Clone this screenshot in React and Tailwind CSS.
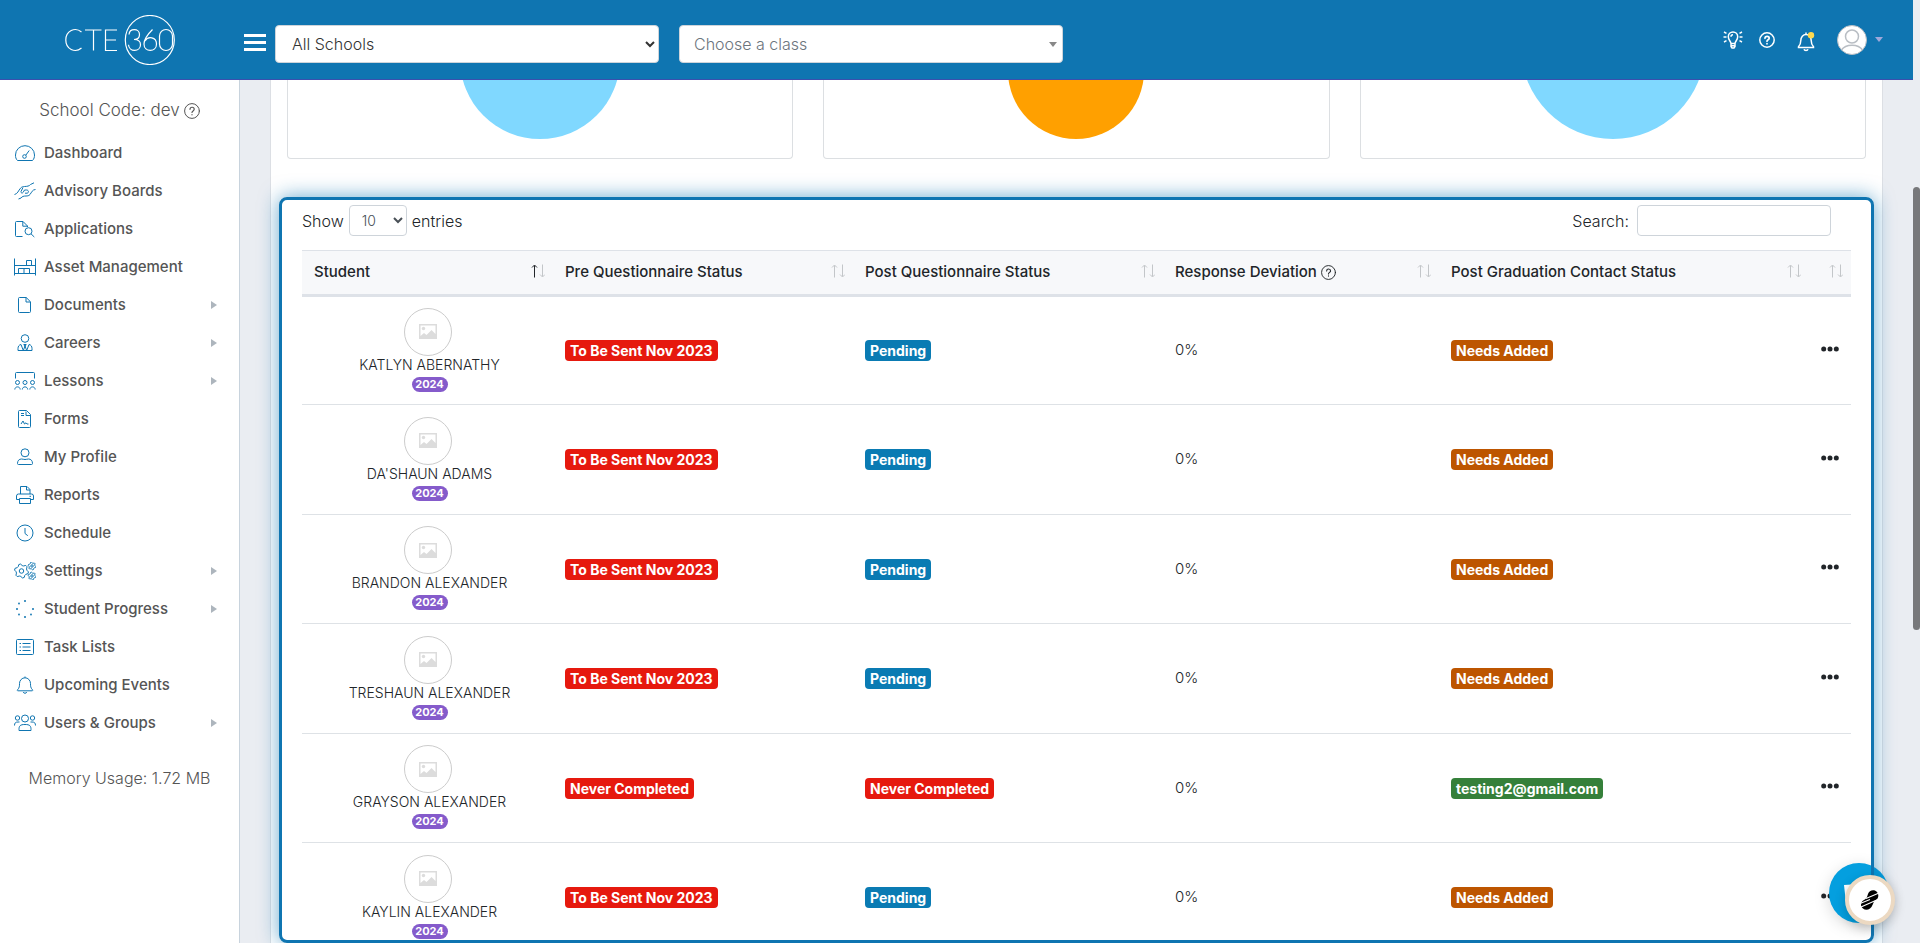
import React from 'react';

const menuItems = [
    { label: 'Dashboard', icon: 'dashboard' },
    { label: 'Advisory Boards', icon: 'hands' },
    { label: 'Applications', icon: 'fileSearch' },
    { label: 'Asset Management', icon: 'shelves' },
    { label: 'Documents', icon: 'file', hasChildren: true },
    { label: 'Careers', icon: 'tie', hasChildren: true },
    { label: 'Lessons', icon: 'classroom', hasChildren: true },
    { label: 'Forms', icon: 'form' },
    { label: 'My Profile', icon: 'user' },
    { label: 'Reports', icon: 'print' },
    { label: 'Schedule', icon: 'clock' },
    { label: 'Settings', icon: 'cogs', hasChildren: true },
    { label: 'Student Progress', icon: 'spinner', hasChildren: true },
    { label: 'Task Lists', icon: 'list' },
    { label: 'Upcoming Events', icon: 'bell' },
    { label: 'Users & Groups', icon: 'users', hasChildren: true },
];

const columns = [
    { label: 'Student', width: 'w-[251px]', sorted: true },
    { label: 'Pre Questionnaire Status', width: 'w-[300px]' },
    { label: 'Post Questionnaire Status', width: 'w-[310px]' },
    { label: 'Response Deviation', width: 'w-[276px]', help: true },
    { label: 'Post Graduation Contact Status', width: 'w-[370px]' },
    { label: '', width: 'w-[42px]' },
];

const toBeSent = { text: 'To Be Sent Nov 2023', color: 'bg-[#e6190e]' };
const never = { text: 'Never Completed', color: 'bg-[#e6190e]' };
const pending = { text: 'Pending', color: 'bg-[#0a7bb3]' };
const needsAdded = { text: 'Needs Added', color: 'bg-[#bd5500]' };

const students = [
    { name: 'KATLYN ABERNATHY', pre: toBeSent, post: pending, contact: needsAdded },
    { name: "DA'SHAUN ADAMS", pre: toBeSent, post: pending, contact: needsAdded },
    { name: 'BRANDON ALEXANDER', pre: toBeSent, post: pending, contact: needsAdded },
    { name: 'TRESHAUN ALEXANDER', pre: toBeSent, post: pending, contact: needsAdded },
    { name: 'GRAYSON ALEXANDER', pre: never, post: never, contact: { text: 'testing2@gmail.com', color: 'bg-[#35803a]' } },
    { name: 'KAYLIN ALEXANDER', pre: toBeSent, post: pending, contact: needsAdded },
];

// Outline of a toothed wheel, with its hub
const gear = (cx, cy, r, teeth) => {
    const points = [];
    for (let i = 0; i < teeth * 4; i++) {
        const angle = ((i + 0.5) / (teeth * 4)) * Math.PI * 2;
        const radius = i % 4 < 2 ? r : r * 0.78;
        points.push(`${(cx + radius * Math.cos(angle)).toFixed(2)},${(cy + radius * Math.sin(angle)).toFixed(2)}`);
    }
    return (
        <>
            <polygon points={points.join(' ')} />
            <circle cx={cx} cy={cy} r={r * 0.32} />
        </>
    );
};

// All menu glyphs share a 22x18 box
const menuIcons = {
    dashboard: <><path d="M3.500 16.500C1.800 15 1.500 13 1.500 11a9.500 9.300 0 0 1 19 0c0 2-.4 4-2 5.500z" /><circle cx="10.500" cy="12.500" r="1.800" /><path d="M11.800 11.200l3.400-4.700" /></>,
    hands: <path d="M.5 12.500C3.500 12 4.500 8.500 6.500 6.200 7.500 5 9 4.500 10.500 4.500c2.500 0 5-.5 6-2L20 .8M21.500 7.500c-3 0-4 3-5.500 5-1 1.300-2.500 1.500-4 1.500-2.500 0-4 .5-5 2L4.500 17M9 5.500L7 9.500c-.5 1.500 1.500 2 2.200.8L10.500 8h2.200c2.300.2 2.300 3 .3 3.200h-2" />,
    fileSearch: <><path d="M8.500 16.500h-6a1 1 0 0 1-1-1v-13a1 1 0 0 1 1-1H9l4.500 4.500v1M8.800 1.500v4.700h4.700" /><circle cx="14.500" cy="11.200" r="3.500" /><path d="M17 13.800l3.300 3.200" /></>,
    shelves: <path d="M.5.5v17M21.500.5v17M.5 7.500h21M.5 15.500h21M12.500 7V2.500h5V7M4.500 15v-4.500h11V15M10 10.500V15" />,
    file: <path d="M12 1.500v4.500h4.500M5.500 1.500h6.700l4.300 4.300v9.700a1 1 0 0 1-1 1h-10a1 1 0 0 1-1-1v-13a1 1 0 0 1 1-1z" />,
    tie: <><circle cx="11" cy="4.500" r="3.800" /><path d="M7 10.500c-2 .3-3 2-3 4v2h14v-2c0-2-1-3.700-3-4l-2.300 6L11 12l-1.700 4.500zM9.800 10.500h2.400L11 12.500z" /></>,
    classroom: <><path d="M1.500 6.500v-5a1 1 0 0 1 1-1h17a1 1 0 0 1 1 1v5" /><circle cx="3.500" cy="10.500" r="2" /><circle cx="11" cy="10.500" r="2" /><circle cx="18.500" cy="10.500" r="2" /><path d="M.8 17.500c.2-3.500 5.200-3.500 5.400 0M8.300 17.500c.2-3.500 5.200-3.500 5.400 0M15.800 17.500c.2-3.500 5.200-3.500 5.400 0" /></>,
    form: <><path d="M12 1.500v4h4.500M5.500.5h7l4 4v12a1 1 0 0 1-1 1h-10a1 1 0 0 1-1-1v-15a1 1 0 0 1 1-1zM7 3.500h3M7 5.500h3" /><path d="M7 14l2-3 1.500 3 1.500-1.200 1 1.200h1.500" /></>,
    user: <><circle cx="11" cy="4.800" r="4" /><path d="M3.500 15.500c0-3 1.700-4.500 4-4.500 1.500 0 2 .5 3.500.5s2-.5 3.500-.5c2.300 0 4 1.500 4 4.500 0 .7-.4 1-1 1h-13c-.6 0-1-.3-1-1z" /></>,
    print: <><path d="M6.500 8V.500h6.500l3 3V8M12.500.500v3.500H16M5.500 13.500h-3v-3.500a2 2 0 0 1 2-2h13a2 2 0 0 1 2 2v3.500h-3" /><path d="M5.500 12.500h11v5h-11z" /><path d="M15.500 10.300h1.500" /></>,
    clock: <><circle cx="11" cy="9" r="8" /><path d="M11 4v5.500l2.800 2.200" /></>,
    cogs: <>{gear(7.5, 9, 7, 6)}{gear(18, 4, 3.8, 6)}{gear(18, 14, 3.8, 6)}</>,
    spinner: (
        <g fill="#0f75b1" stroke="none">
            <circle cx="11" cy="1" r="1" /><circle cx="5" cy="3.500" r=".9" /><circle cx="3" cy="9" r="1" /><circle cx="5" cy="14.500" r=".9" />
            <circle cx="11" cy="17" r="1" /><circle cx="17" cy="14.500" r=".9" /><circle cx="19" cy="9" r="1" />
        </g>
    ),
    list: <><rect x="2.500" y="1.500" width="17" height="15" rx="1" /><path d="M5.500 5.500h1.500M8.500 5.500h8M5.500 9h1.500M8.500 9h8M5.500 12.500h1.500M8.500 12.500h8" /></>,
    bell: <path d="M11 .5v1.300M3.500 13.800c2-2 2-3.800 2-6.300a5.500 5.700 0 0 1 11 0c0 2.500 0 4.300 2 6.300.4.500.2 1-.4 1H3.900c-.6 0-.8-.5-.4-1zM9.300 16c.3 1.700 3.100 1.700 3.400 0" />,
    users: <><circle cx="11" cy="4.500" r="3.500" /><circle cx="3.500" cy="4" r="2.200" /><circle cx="18.500" cy="4" r="2.200" /><path d="M5 15.500c0-3.500 1-5 6-5s6 1.500 6 5v1H5zM.5 11.500c0-2.500 1-3.500 3.500-3.500h1.500M21.500 11.500c0-2.500-1-3.500-3.500-3.500h-1.500" /></>,
};

const MenuIcon = ({ name }) => (
    <svg viewBox="0 0 22 18" fill="none" stroke="#0f75b1" strokeLinejoin="round" className="w-[22px] h-[18px] shrink-0">
        {menuIcons[name]}
    </svg>
);

const HelpIcon = ({ className }) => (
    <svg viewBox="0 0 16 16" fill="none" stroke="currentColor" strokeLinecap="round" className={className}>
        <circle cx="8" cy="8" r="7.400" />
        <path d="M6 6.300c.1-2.800 4.200-2.700 4.200 0C10.200 7.900 8 7.900 8 9.500M8 11.600v.2" strokeWidth="1.200" />
    </svg>
);

const SortIcon = ({ sorted }) => (
    <svg viewBox="0 0 14 14" fill="none" stroke="#c3c6c9" className="w-[14px] h-[14px] shrink-0">
        <path d="M3.500 13.500V1.500M1 3.500l2.500-2.500L6 3.500" stroke={sorted ? '#212529' : '#c3c6c9'} />
        <path d="M11.500 .5v12M9 10.500l2.500 2.500L14 10.500" />
    </svg>
);

const Logo = () => (
    <svg viewBox="0 0 112 50" fill="none" stroke="#fff" strokeWidth="1.200" className="w-[112px] h-[50px]" role="img" aria-label="CTE 360">
        <path d="M16.500 17C10 11.500.8 16 .8 25s9.200 13.500 15.700 8M20 15h16.500M28.500 15v20.500M52 15H40.500v20.500H52M40.500 25H51" />
        <circle cx="84.800" cy="25" r="24.500" />
        <path d="M64 19.500c.5-6.500 10.500-6.500 10.500 0 0 3.500-2.500 5-5.500 5 3.500 0 6.500 1.500 6.500 5.200 0 7.500-11.500 7.500-12 0" />
        <path d="M87.500 14.500c-4 4-8.500 9-8.500 14.500 0 8.500 12.500 8.500 12.500 0 0-7-8.500-8.500-11.500-3" />
        <rect x="94.500" y="14.500" width="13" height="21" rx="6.500" />
    </svg>
);

const TopBar = () => (
    <header className="h-20 mr-[7px] shrink-0 bg-[#0f75b1] border-b border-[#3b4fae] flex items-center relative z-10">
        <div className="w-60 pl-px shrink-0 flex justify-center"><Logo /></div>
        <button type="button" aria-label="Toggle menu" className="ml-1 mt-1.5 flex flex-col gap-1">
            <span className="block w-[22px] h-[3px] bg-white"></span>
            <span className="block w-[22px] h-[3px] bg-white"></span>
            <span className="block w-[22px] h-[3px] bg-white"></span>
        </button>
        <select aria-label="School" className="ml-[9px] mt-2 w-[384px] h-[38px] rounded border border-[#ced4da] bg-white px-3 text-[#333] text-base font-light">
            <option>All Schools</option>
        </select>
        <div className="relative ml-5 mt-2 w-[384px]">
            <select aria-label="Class" className="appearance-none w-full h-[38px] rounded border border-[#ced4da] bg-white px-3.5 text-[#6c757d] text-base font-light">
                <option>Choose a class</option>
            </select>
            <span className="absolute right-1.5 top-[17px] border-x-4 border-t-[5px] border-x-transparent border-t-[#888]"></span>
        </div>
        <div className="ml-auto mr-[30px] flex items-center text-white">
            <button type="button" aria-label="Tips">
                <svg viewBox="0 0 20 18" fill="none" stroke="currentColor" strokeWidth="1.500" className="w-5 h-[18px]">
                    <path d="M8 12.500C8 10.500 5.300 9 5.300 5.700a4.700 4.700 0 0 1 9.400 0C14.700 9 12 10.500 12 12.500zM8 12.500v3l1 1.500h2l1-1.500v-3M8 14.800h4M8 5.800c0-1.300.8-2 2-2M.5 6h3M16.500 6h3M1 1l2.500 1.300M19 1l-2.500 1.300M1 11l2.500-1.300M19 11l-2.500-1.300" />
                </svg>
            </button>
            <button type="button" aria-label="Help" className="ml-4">
                <svg viewBox="0 0 16 16" fill="none" stroke="currentColor" strokeWidth="1.500" strokeLinecap="round" className="w-4 h-4">
                    <circle cx="8" cy="8" r="7.200" />
                    <path d="M6 6.300c.1-2.600 4.200-2.500 4.200 0C10.200 7.800 8 7.800 8 9.200M8 11.600v.2" strokeWidth="1.700" />
                </svg>
            </button>
            <button type="button" aria-label="Notifications" className="ml-5 mt-1">
                <svg viewBox="0 0 22 20" fill="none" stroke="currentColor" strokeWidth="1.500" className="w-[22px] h-5">
                    <path d="M11 .5v1.500M3.500 14.800c2-2 2.300-3.800 2.300-6.300a5.200 6 0 0 1 10.400 0c0 2.500.3 4.300 2.300 6.300v.7h-15zM9 17.300c.5 1.600 3.500 1.600 4 0" />
                    <circle cx="16" cy="3.200" r="3.200" fill="#ffd94f" stroke="none" />
                </svg>
            </button>
            <button type="button" aria-label="Account" className="ml-5 flex items-center gap-2">
                <svg viewBox="0 0 30 30" fill="none" stroke="#b9bec4" strokeWidth="1.500" className="w-[30px] h-[30px]">
                    <circle cx="15" cy="15" r="14.500" fill="#fff" strokeWidth="1" />
                    <circle cx="15" cy="11.500" r="6.500" />
                    <path d="M4.500 25c4-6.500 17-6.500 21 0" />
                </svg>
                <span className="border-x-4 border-t-[5px] border-x-transparent border-t-[#9fa8da]"></span>
            </button>
        </div>
    </header>
);

const Sidebar = () => (
    <aside className="w-60 shrink-0 bg-white border-r border-[#c8d3dd] text-[#555]">
        <p className="mt-[19px] h-6 flex items-center justify-center gap-1 text-[17px] font-light">
            School Code: dev <HelpIcon className="w-4 h-4" />
        </p>
        <nav className="mt-[11px]">
            {menuItems.map((item) => (
                <a key={item.label} href="#" className="h-[38px] pl-3.5 pr-[22px] flex items-center gap-2 text-[15px] font-medium">
                    <MenuIcon name={item.icon} />
                    <span>{item.label}</span>
                    {item.hasChildren && <span className="ml-auto border-y-4 border-l-[6px] border-y-transparent border-l-[#adb5bd]"></span>}
                </a>
            ))}
        </nav>
        <p className="mt-6 text-center text-base font-light">Memory Usage: 1.72 MB</p>
    </aside>
);

const charts = [
    { color: '#80d8ff', cy: 59, r: 80 },
    { color: '#ffa000', cy: 71, r: 68 },
    { color: '#80d8ff', cy: 47, r: 92 },
];

const ChartCards = () => (
    <div className="grid grid-cols-3 gap-[30px] px-4 shrink-0">
        {charts.map((chart, i) => (
            <div key={i} className="h-[79px] border border-t-0 border-[#dcdfe2] rounded-b flex justify-center">
                <svg viewBox="0 80 200 60" className="w-[200px] h-[60px]">
                    <circle cx="100" cy={chart.cy} r={chart.r} fill={chart.color} />
                </svg>
            </div>
        ))}
    </div>
);

const StatusBadge = ({ status }) => (
    <span className={`block w-fit h-[21px] px-[5px] rounded leading-[21px] text-sm font-bold text-white ${status.color}`}>{status.text}</span>
);

const StudentTable = () => (
    <table className="w-full table-fixed border-collapse text-left">
        <thead>
            <tr className="h-[45px] bg-[#f7f8fa] border-t border-b-[3px] border-[#dee2e8]">
                {columns.map((col, i) => (
                    <th key={i} className={`${col.width} p-0 font-medium text-[15px] text-[#212529]`}>
                        <div className="flex items-center pl-3 pr-2">
                            {col.label}
                            {col.help && <HelpIcon className="w-[15px] h-[15px] ml-1" />}
                            <span className="ml-auto mb-1"><SortIcon sorted={col.sorted} /></span>
                        </div>
                    </th>
                ))}
            </tr>
        </thead>
        <tbody>
            {students.map((student) => (
                <tr key={student.name} className="odd:h-[109px] even:h-[110px] border-b border-[#dee2e6] text-[#212529]">
                    <td className="p-0 pb-0.5 text-center">
                        <div className="w-12 h-12 mx-auto rounded-full border border-[#ccc] flex items-center justify-center">
                            <svg viewBox="0 0 18 15" className="w-[18px] h-[15px]" fill="#dcdcdc">
                                <path fillRule="evenodd" d="M0 0h18v15H0zM1.500 1.500v10.500L5 9l2.500 2 5-5 4 4V1.500z" />
                                <circle cx="4.500" cy="4.500" r="1.700" />
                            </svg>
                        </div>
                        <div className="pl-1">
                            <p className="text-sm leading-[18px] font-light">{student.name}</p>
                            <span className="block w-9 h-[15px] mx-auto mt-[3px] rounded-full bg-[#855bcb] text-white text-[11px] leading-[15px] font-bold">2024</span>
                        </div>
                    </td>
                    <td className="p-0 pl-3"><StatusBadge status={student.pre} /></td>
                    <td className="p-0 pl-3"><StatusBadge status={student.post} /></td>
                    <td className="p-0 pl-3 text-[15px] font-light">0%</td>
                    <td className="p-0 pl-3"><StatusBadge status={student.contact} /></td>
                    <td className="p-0 pr-3 pb-1">
                        <button type="button" aria-label="More actions" className="block ml-auto">
                            <svg viewBox="0 0 18 6" className="block w-[18px] h-1.5" fill="#212529">
                                <circle cx="2.700" cy="3" r="2.500" /><circle cx="9" cy="3" r="2.500" /><circle cx="15.300" cy="3" r="2.500" />
                            </svg>
                        </button>
                    </td>
                </tr>
            ))}
        </tbody>
    </table>
);

const App = () => {
    return (
        <div className="h-screen flex flex-col overflow-hidden bg-[#eaedf2] relative font-['Inter',sans-serif]">
            <TopBar />
            <div className="flex flex-1 min-h-0">
                <Sidebar />
                <main className="flex-1 min-w-0 ml-[30px] mr-[37px] bg-white border-x border-[#dcdfe4] flex flex-col">
                    <ChartCards />
                    <section className="relative flex-1 min-h-0 mt-[38px] mx-2">
                        <div className="h-full overflow-hidden rounded-lg px-[23px]">
                            <div className="h-[53px] pt-2 pr-5 flex items-start justify-between text-base font-light text-[#212529]">
                                <label className="flex items-center gap-[5px]">
                                    Show
                                    <select className="w-[58px] h-[31px] px-2 rounded border border-[#ced4da] bg-white text-sm text-[#495057]">
                                        <option>10</option>
                                    </select>
                                    entries
                                </label>
                                <label className="flex items-center gap-2">
                                    Search:
                                    <input type="search" className="w-[194px] h-[31px] px-2 rounded border border-[#ced4da] bg-white text-sm" />
                                </label>
                            </div>
                            <StudentTable />
                        </div>
                        {/* Highlight frame drawn over the table and the chat bubble */}
                        <div className="absolute inset-0 z-20 pointer-events-none rounded-lg border-[3px] border-[#0f75b1] shadow-[0_0_20px_#0f75b1a0]"></div>
                    </section>
                </main>
            </div>

            <div className="absolute right-0 top-[187px] w-[7px] h-[443px] rounded-full bg-[#77787b]"></div>

            {/* Floating buttons */}
            <button type="button" aria-label="Open chat" className="absolute z-10 right-[31px] bottom-5 w-[60px] h-[60px] rounded-full bg-[#049fdf] shadow-[0_4px_16px_rgba(0,0,0,0.15)]">
                <svg viewBox="0 0 60 60" className="w-full h-full" fill="#fff">
                    <path d="M15 22l30-2v20l-8 6-2-4-18-2z" />
                </svg>
            </button>
            <button type="button" aria-label="Open assistant" className="absolute z-30 right-[25px] bottom-[18px] w-[50px] h-[50px] rounded-full bg-white border-4 border-[#ecd9c2] shadow-[0_4px_12px_rgba(0,0,0,0.2)] flex items-center justify-center">
                <svg viewBox="0 0 20 22" className="w-5 h-[22px]">
                    <path d="M8 5C9 1 14 0 16.500 2.500S19 9 16 11c-2.500 1-2 2.500-3.500 5C11 20.500 6 22 3 19.500S.5 13 4 11c3-1.500 3-3 4-6z" />
                    <path d="M6 9.500l13-5.500M1 18l18-8M0 14.500l10-4" stroke="#fff" strokeWidth="1.100" />
                </svg>
            </button>
        </div>
    );
};

export default App;
